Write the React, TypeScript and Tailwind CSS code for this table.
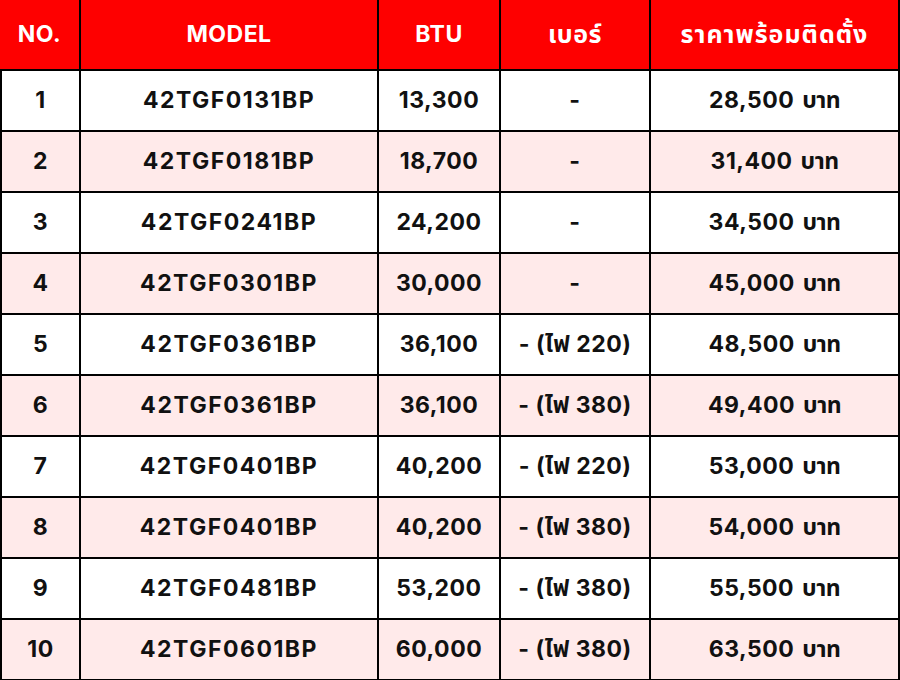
import React from "react";

const rows: [string, string, string, string, string][] = [
  ["1", "42TGF0131BP", "13,300", "-", "28,500"],
  ["2", "42TGF0181BP", "18,700", "-", "31,400"],
  ["3", "42TGF0241BP", "24,200", "-", "34,500"],
  ["4", "42TGF0301BP", "30,000", "-", "45,000"],
  ["5", "42TGF0361BP", "36,100", "- (ไฟ 220)", "48,500"],
  ["6", "42TGF0361BP", "36,100", "- (ไฟ 380)", "49,400"],
  ["7", "42TGF0401BP", "40,200", "- (ไฟ 220)", "53,000"],
  ["8", "42TGF0401BP", "40,200", "- (ไฟ 380)", "54,000"],
  ["9", "42TGF0481BP", "53,200", "- (ไฟ 380)", "55,500"],
  ["10", "42TGF0601BP", "60,000", "- (ไฟ 380)", "63,500"],
];

const cellBase = "text-[#111111] font-bold text-[23px] flex items-center justify-center";

export default function App() {
  return (
    <div
      className="w-[900px] h-[680px] bg-black grid grid-cols-[79px_296px_120px_148px_247px] grid-rows-[69px_repeat(10,59px)] gap-[2px] pr-[2px] pb-[1px] overflow-hidden"
      style={{ fontFamily: 'Inter, "Noto Sans", "Noto Sans Thai", sans-serif' }}
    >
      <div className="bg-[#fe0000] text-white font-bold text-[23px] tracking-[0.5px] flex items-center justify-center">NO.</div>
      <div className="bg-[#fe0000] text-white font-bold text-[23px] tracking-[0.5px] flex items-center justify-center">MODEL</div>
      <div className="bg-[#fe0000] text-white font-bold text-[23px] tracking-[0.5px] flex items-center justify-center">BTU</div>
      <div className="bg-[#fe0000] text-white font-bold text-[25px] tracking-[0.5px] flex items-center justify-center">เบอร์</div>
      <div className="bg-[#fe0000] text-white font-bold text-[25px] tracking-[1px] flex items-center justify-center">ราคาพร้อมติดตั้ง</div>
      {rows.map((r, i) => {
        const bg = i % 2 === 1 ? "bg-[#ffeaea]" : "bg-white";
        return (
          <React.Fragment key={i}>
            <div className={bg + " border-l-2 border-black tracking-[0.5px] " + cellBase}>{r[0]}</div>
            <div className={bg + " tracking-[1.5px] " + cellBase}>{r[1]}</div>
            <div className={bg + " tracking-[0.5px] " + cellBase}>{r[2]}</div>
            <div className={bg + " tracking-[0.5px] " + cellBase}>{r[3]}</div>
            <div className={bg + " tracking-[0.5px] gap-[8px] " + cellBase}>
              <span>{r[4]}</span>
              <span className="tracking-[-0.5px] text-[23px]">บาท</span>
            </div>
          </React.Fragment>
        );
      })}
    </div>
  );
}
